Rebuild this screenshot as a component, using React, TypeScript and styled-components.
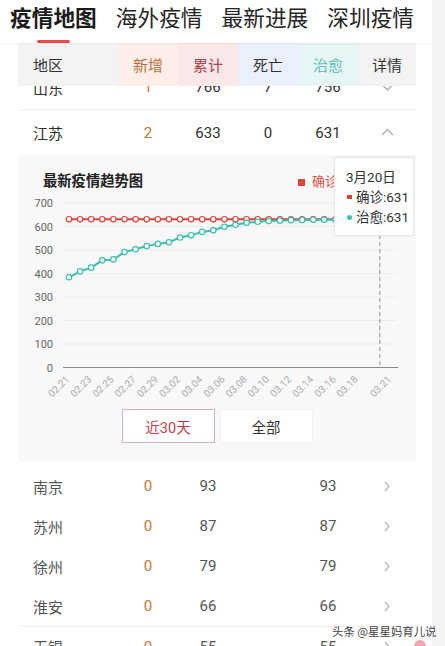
import React from 'react';
import styled, { createGlobalStyle, css } from 'styled-components';

const Global = createGlobalStyle`
  html, body { margin: 0; padding: 0; background: #fff; }
  body { font-family: Roboto, "Noto Sans CJK SC", "Noto Sans", sans-serif; overflow: hidden; }
  * { box-sizing: border-box; }
`;

const Screen = styled.div`
  position: relative;
  display: flex;
  width: 445px;
  height: 646px;
  overflow: hidden;
`;

const Main = styled.div`
  flex: 0 0 432px;
  background: #fff;
  overflow: hidden;
`;

const SideStrip = styled.div`
  flex: 1;
  background: #f4f4f4;
`;

const TabBar = styled.div`
  position: relative;
  z-index: 3;
  height: 43px;
  display: flex;
  align-items: flex-start;
  gap: 19px;
  padding-left: 10px;
  background: #fff;
  box-shadow: 0 1px 2px rgba(0, 0, 0, 0.06);
  font-family: "Noto Sans CJK SC", sans-serif;
`;

const Tab = styled.div<{ $active?: boolean }>`
  position: relative;
  font-size: 21.7px;
  line-height: 34px;
  white-space: nowrap;
  font-weight: ${p => (p.$active ? 700 : 400)};
  color: ${p => (p.$active ? '#1c1c1c' : '#262626')};
  ${p =>
    p.$active &&
    css`
      &::after {
        content: '';
        position: absolute;
        left: 27px;
        top: 40px;
        width: 33px;
        height: 3px;
        border-radius: 2px;
        background: #e8474c;
      }
    `}
`;

const TableArea = styled.div`
  padding: 0 16px 0 18px;
`;

const COLS = '100px 60px 60px 60px 60px 58px';

const Header = styled.div`
  position: relative;
  z-index: 2;
  display: grid;
  grid-template-columns: ${COLS};
  height: 43px;
`;

const HeadCell = styled.div<{ $bg: string; $color: string; $left?: boolean }>`
  background: ${p => p.$bg};
  color: ${p => p.$color};
  font-size: 15px;
  display: flex;
  align-items: center;
  justify-content: ${p => (p.$left ? 'flex-start' : 'center')};
  padding-left: ${p => (p.$left ? '15px' : '0')};
`;

const Body = styled.div`
  margin-top: -21px;
`;

const ProvinceRow = styled.div<{ $line?: boolean }>`
  display: grid;
  grid-template-columns: ${COLS};
  height: 45px;
  align-items: center;
  font-size: 15px;
  color: #2f2f2f;
  border-bottom: ${p => (p.$line ? '1px solid #eeeeee' : 'none')};
`;

const CityRow = styled.div<{ $line?: boolean }>`
  display: grid;
  grid-template-columns: ${COLS};
  height: 40px;
  align-items: center;
  font-size: 15px;
  color: #555;
  border-top: ${p => (p.$line ? '1px solid #eeeeee' : 'none')};
`;

const NameCell = styled.div`
  padding-left: 15px;
`;

const NumCell = styled.div<{ $accent?: boolean }>`
  text-align: center;
  color: ${p => (p.$accent ? '#c47834' : 'inherit')};
`;

const IconCell = styled.div`
  display: flex;
  justify-content: center;
  align-items: center;
`;

const CityList = styled.div`
  padding-top: 4px;
`;

const ChartPanel = styled.div`
  position: relative;
  background: #f8f8f8;
  padding-bottom: 19px;
`;

const TitleRow = styled.div`
  display: grid;
  grid-template-columns: 255px 1fr;
  padding: 17px 0 0 25px;
  height: 37px;
  line-height: 16px;
`;

const ChartTitle = styled.div`
  font-family: "Noto Sans CJK SC", sans-serif;
  font-size: 14.3px;
  font-weight: 700;
  color: #222;
`;

const Legend = styled.div`
  display: flex;
  align-items: center;
  gap: 16px;
  white-space: nowrap;
`;

const LegendItem = styled.div<{ $color: string }>`
  display: flex;
  align-items: center;
  gap: 7px;
  font-size: 13px;
  color: ${p => p.$color};
`;

const LegendMark = styled.span<{ $color: string }>`
  width: 7px;
  height: 7px;
  background: ${p => p.$color};
`;

const ChartSvg = styled.svg`
  display: block;
`;

const ButtonRow = styled.div`
  display: flex;
  justify-content: center;
  gap: 5px;
  margin-top: 7px;
`;

const RangeButton = styled.div<{ $active?: boolean }>`
  width: 93px;
  height: 34px;
  display: flex;
  align-items: center;
  justify-content: center;
  background: #fff;
  font-size: 14.5px;
  border: 1px solid ${p => (p.$active ? '#dcb0b5' : '#f1f1f1')};
  color: ${p => (p.$active ? '#c53d4f' : '#333')};
`;

const Tooltip = styled.div`
  position: absolute;
  left: 316px;
  top: 2px;
  width: 80px;
  height: 79px;
  padding: 9px 0 0 11px;
  background: rgba(255, 255, 255, 0.9);
  border: 1px solid #e6e6e6;
  box-shadow: 0 0 3px rgba(0, 0, 0, 0.06);
  font-size: 13.5px;
  line-height: 20px;
  color: #333;
`;

const TipLine = styled.div`
  display: flex;
  align-items: center;
  white-space: nowrap;
`;

const TipDot = styled.span<{ $color: string; $round?: boolean }>`
  width: 5px;
  height: ${p => (p.$round ? '5px' : '4px')};
  border-radius: ${p => (p.$round ? '50%' : '0')};
  background: ${p => p.$color};
  margin: 0 4px 0 1px;
`;

const Watermark = styled.div`
  position: absolute;
  left: 332px;
  top: 623px;
  font-family: "Noto Sans CJK SC", sans-serif;
  font-size: 11.4px;
  color: #444;
  white-space: nowrap;
  text-shadow: 0 0 2px #fff, 0 0 2px #fff;
`;

const WaterIcon = styled.span`
  position: absolute;
  left: 414px;
  top: 640px;
  width: 12px;
  height: 12px;
  border-radius: 50%;
  background: #f4a6b0;
`;

const RED = '#d8463c';
const TEAL = '#3dbdaf';

const Chevron = ({ dir }: { dir: 'up' | 'down' | 'right' }) => {
  if (dir === 'right') {
    return (
      <svg width="8" height="11" viewBox="0 0 8 11">
        <polyline points="2,1 6,5.5 2,10" fill="none" stroke="#b0b0b0" strokeWidth="1.2" />
      </svg>
    );
  }
  const pts = dir === 'up' ? '1,7 6.5,1.5 12,7' : '1,1.5 6.5,7 12,1.5';
  return (
    <svg width="13" height="9" viewBox="0 0 13 9">
      <polyline points={pts} fill="none" stroke="#ababab" strokeWidth="1.3" />
    </svg>
  );
};

const X0 = 69;
const DX = 11.1;
const Y0 = 367.5;
const K = 0.235;
const px = (i: number) => X0 + DX * i;
const py = (v: number) => Y0 - v * K;

const cured = [
  384, 409, 425, 456, 460, 491, 503, 517, 526, 533, 553, 563, 577, 584, 599, 607, 616, 620, 623, 625,
  627, 628, 629, 629, 630, 630, 631, 631, 631, 631,
];
const confirmed = cured.map(() => 631);

const dateLabels: { i: number; t: string }[] = [
  ['02.21', 0], ['02.23', 2], ['02.25', 4], ['02.27', 6], ['02.29', 8], ['03.02', 10], ['03.04', 12],
  ['03.06', 14], ['03.08', 16], ['03.10', 18], ['03.12', 20], ['03.14', 22], ['03.16', 24], ['03.18', 26],
  ['03.21', 29],
].map(([t, i]) => ({ t: t as string, i: i as number }));

const Chart = () => {
  const line = (d: number[]) => d.map((v, i) => `${px(i)},${py(v)}`).join(' ');
  return (
    <ChartSvg width="398" height="210" viewBox="18 192 398 210">
      {[100, 200, 300, 400, 500, 600, 700].map(v => (
        <line key={v} x1="63" x2="397" y1={py(v)} y2={py(v)} stroke="#ececec" strokeWidth="1" />
      ))}
      {[0, 100, 200, 300, 400, 500, 600, 700].map(v => (
        <text key={v} x="53" y={py(v) + 4} textAnchor="end" fontSize="11" fill="#666" fontFamily="Roboto">
          {v}
        </text>
      ))}
      <line x1="63" x2="398" y1={Y0} y2={Y0} stroke="#8a8a8a" strokeWidth="1" />
      <line x1={px(28)} x2={px(28)} y1="200" y2={Y0} stroke="#8c8c8c" strokeWidth="1" strokeDasharray="4 3" />
      {dateLabels.map(l => (
        <text
          key={l.t}
          x={px(l.i) + 1}
          y="380"
          textAnchor="end"
          fontSize="10"
          fill="#aaa"
          fontFamily="Roboto"
          transform={`rotate(-45 ${px(l.i) + 1} 380)`}
        >
          {l.t}
        </text>
      ))}
      <polyline points={line(confirmed)} fill="none" stroke={RED} strokeWidth="2" />
      {confirmed.map((v, i) => (
        <circle key={i} cx={px(i)} cy={py(v)} r="2.7" fill="#fff" stroke={RED} strokeWidth="1.2" />
      ))}
      <polyline points={line(cured)} fill="none" stroke={TEAL} strokeWidth="2" />
      {cured.map((v, i) => (
        <circle key={i} cx={px(i)} cy={py(v)} r="2.7" fill="#fff" stroke={TEAL} strokeWidth="1.2" />
      ))}
      <circle cx={px(28)} cy={py(631) + 3} r="4.5" fill={TEAL} opacity="0.5" />
    </ChartSvg>
  );
};

const header = [
  { t: '地区', bg: '#f3f3f3', c: '#333', left: true },
  { t: '新增', bg: '#fdeee9', c: '#b8713c' },
  { t: '累计', bg: '#fae8e8', c: '#b0404e' },
  { t: '死亡', bg: '#e9f0fb', c: '#333' },
  { t: '治愈', bg: '#e6f6f5', c: '#5fbfb7' },
  { t: '详情', bg: '#f3f3f3', c: '#333' },
];

const cities = [
  ['南京', '0', '93', '', '93'],
  ['苏州', '0', '87', '', '87'],
  ['徐州', '0', '79', '', '79'],
  ['淮安', '0', '66', '', '66'],
  ['无锡', '0', '55', '', '55'],
];

export default function App() {
  return (
    <>
      <Global />
      <Screen>
        <Main>
          <TabBar>
            <Tab $active>疫情地图</Tab>
            <Tab>海外疫情</Tab>
            <Tab>最新进展</Tab>
            <Tab>深圳疫情</Tab>
          </TabBar>
          <TableArea>
            <Header>
              {header.map(h => (
                <HeadCell key={h.t} $bg={h.bg} $color={h.c} $left={h.left}>
                  {h.t}
                </HeadCell>
              ))}
            </Header>
            <Body>
              <ProvinceRow $line>
                <NameCell>山东</NameCell>
                <NumCell $accent>1</NumCell>
                <NumCell>766</NumCell>
                <NumCell>7</NumCell>
                <NumCell>756</NumCell>
                <IconCell>
                  <Chevron dir="down" />
                </IconCell>
              </ProvinceRow>
              <ProvinceRow>
                <NameCell>江苏</NameCell>
                <NumCell $accent>2</NumCell>
                <NumCell>633</NumCell>
                <NumCell>0</NumCell>
                <NumCell>631</NumCell>
                <IconCell>
                  <Chevron dir="up" />
                </IconCell>
              </ProvinceRow>
              <ChartPanel>
                <TitleRow>
                  <ChartTitle>最新疫情趋势图</ChartTitle>
                  <Legend>
                    <LegendItem $color="#d6513f">
                      <LegendMark $color={RED} />
                      确诊
                    </LegendItem>
                    <LegendItem $color={TEAL}>
                      <LegendMark $color={TEAL} />
                      治愈
                    </LegendItem>
                  </Legend>
                </TitleRow>
                <Chart />
                <ButtonRow>
                  <RangeButton $active>近30天</RangeButton>
                  <RangeButton>全部</RangeButton>
                </ButtonRow>
                <Tooltip>
                  <div>3月20日</div>
                  <TipLine>
                    <TipDot $color={RED} />
                    确诊:631
                  </TipLine>
                  <TipLine>
                    <TipDot $color={TEAL} $round />
                    治愈:631
                  </TipLine>
                </Tooltip>
              </ChartPanel>
              <CityList>
                {cities.map((c, idx) => (
                  <CityRow key={c[0]} $line={idx === 4}>
                    <NameCell>{c[0]}</NameCell>
                    <NumCell $accent>{c[1]}</NumCell>
                    <NumCell>{c[2]}</NumCell>
                    <NumCell>{c[3]}</NumCell>
                    <NumCell>{c[4]}</NumCell>
                    <IconCell>
                      <Chevron dir="right" />
                    </IconCell>
                  </CityRow>
                ))}
              </CityList>
            </Body>
          </TableArea>
        </Main>
        <SideStrip />
        <Watermark>头条 @星星妈育儿说</Watermark>
        <WaterIcon />
      </Screen>
    </>
  );
}
